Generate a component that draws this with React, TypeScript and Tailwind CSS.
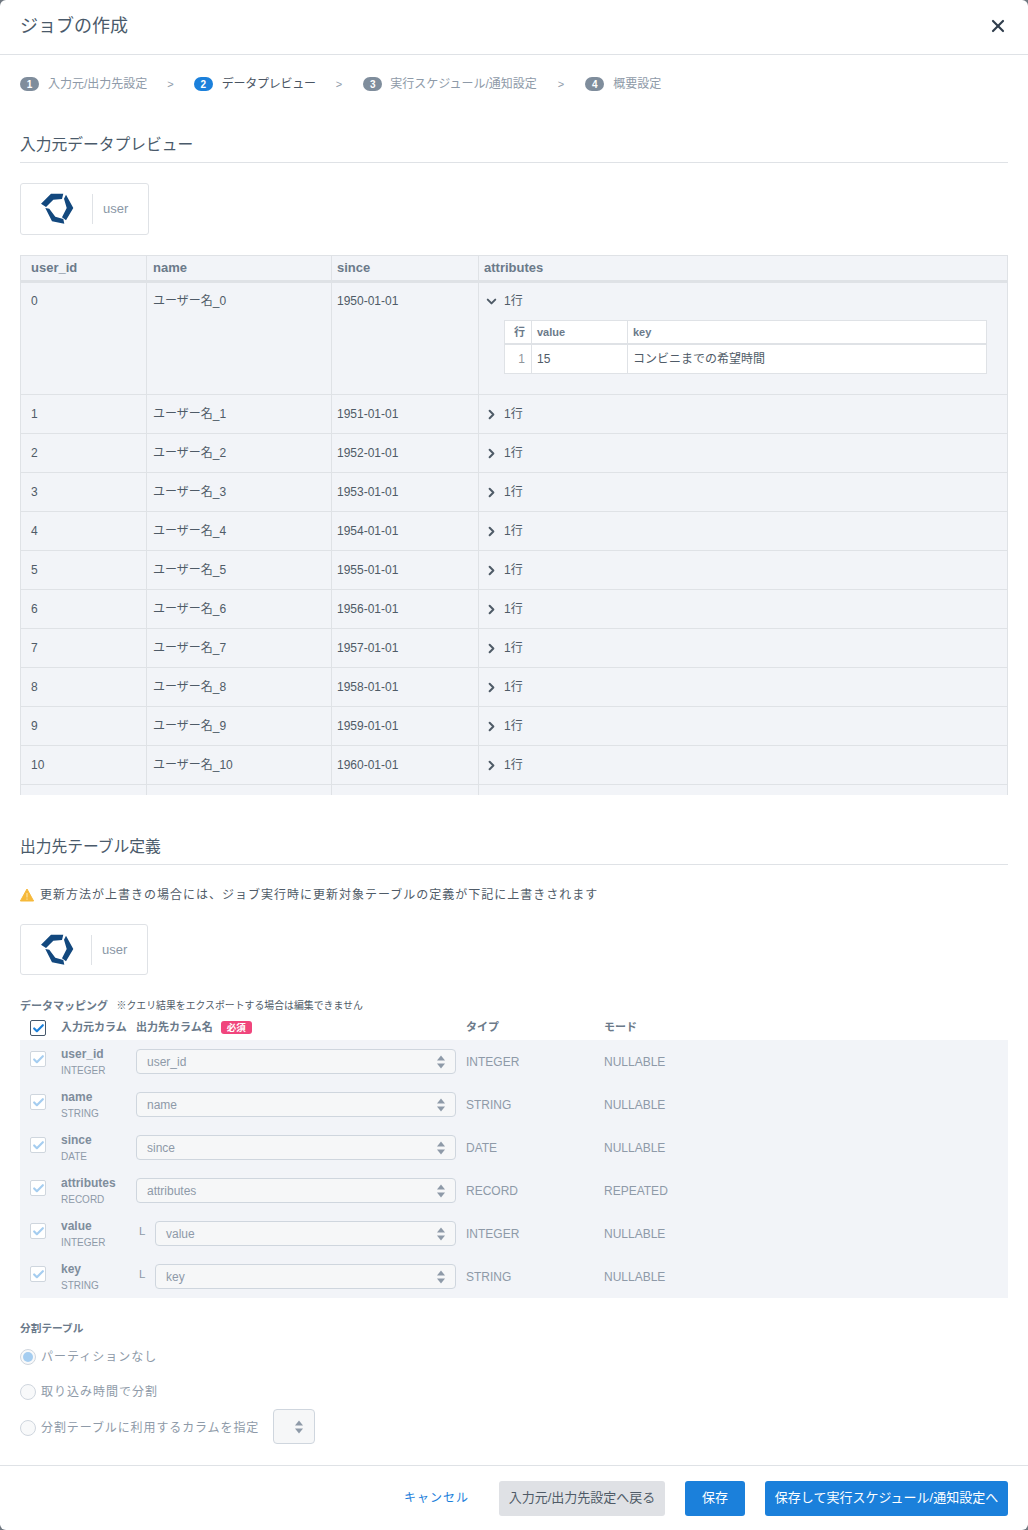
import { ChevronDown, ChevronRight, X, Check } from "lucide-react";

const FONT = 'font-["Liberation_Sans","Noto_Sans_CJK_JP",sans-serif]';

function Logo() {
  return (
    <svg width="33" height="32" viewBox="0 0 33 32" fill="#12487e" className="shrink-0">
      <path d="M0 10.7 L10 0.7 L22.3 0.7 L21 6 L12.3 6.7 L5 14 Z" strokeLinejoin="round" />
      <path d="M25 1.7 L32.3 15 L25 27.3 L21 24.3 L25.7 15 L23 5.7 Z" strokeLinejoin="round" />
      <path d="M4.3 15 L11 28.3 L23.3 30.7 L22.3 26 L14.3 23.7 L8.3 15.7 Z" strokeLinejoin="round" />
    </svg>
  );
}

function TableChip({ w, h, gap }: { w: string; h: string; gap: string }) {
  return (
    <div className={`flex items-center rounded-[3px] border border-[#dfe2e6] bg-white pl-5 ${w} ${h}`}>
      <Logo />
      <div className={`h-[30px] w-px bg-[#dfe2e6] ${gap}`} />
      <span className="ml-[10px] text-[13px] text-[#8a97a6]">user</span>
    </div>
  );
}

function Step({
  n,
  label,
  active,
  arrowCls,
  cls,
  wrap,
}: {
  n: number;
  label: string;
  active?: boolean;
  arrowCls?: string;
  cls?: string;
  wrap?: string;
}) {
  return (
    <div className={`flex items-center ${wrap ?? ""}`}>
      <span
        className={`flex h-[14px] w-[19px] items-center justify-center rounded-full text-[10px] font-bold text-white ${
          active ? "bg-[#1b80db]" : "bg-[#7f8d9c]"
        }`}
      >
        {n}
      </span>
      <span className={`text-xs ${active ? "text-[#4a5563]" : "text-[#8e9aa8]"} ${cls ?? "ml-[9px]"}`}>{label}</span>
      {arrowCls && <span className={`text-[11px] text-[#8e9aa8] ${arrowCls}`}>&gt;</span>}
    </div>
  );
}

function SectionTitle({ children }: { children: string }) {
  return (
    <div className="h-[29px] border-b border-[#dfe2e6] text-[15.75px] leading-[22px] text-[#4a5a6a]">{children}</div>
  );
}

const COLS = "grid grid-cols-[125px_185px_147px_1fr]";

function DataRow({ i }: { i: number }) {
  return (
    <div className={`${COLS} h-[39px] items-stretch border-b border-[#dfe2e6] text-xs text-[#4f5b67]`}>
      <div className="flex items-center pl-[10px]">{i}</div>
      <div className="flex items-center border-l border-[#dfe2e6] pl-[6px]">ユーザー名_{i}</div>
      <div className="flex items-center border-l border-[#dfe2e6] pl-[5px]">{1950 + i}-01-01</div>
      <div className="flex items-center border-l border-[#dfe2e6] pl-[5px]">
        <ChevronRight size={15} strokeWidth={3.2} className="text-[#4f5b67]" />
        <span className="ml-[5px]">1行</span>
      </div>
    </div>
  );
}

function PreviewTable() {
  return (
    <div className="mt-5 h-[540px] overflow-hidden border-x border-t border-[#dfe2e6] bg-[#f2f4f8]">
      <div className={`${COLS} h-[27px] items-center border-b-[3px] border-[#dfe2e6] text-[13px] font-bold text-[#6b7a8a]`}>
        <div className="flex h-full items-center pl-[10px]">user_id</div>
        <div className="flex h-full items-center border-l border-[#dfe2e6] pl-[6px]">name</div>
        <div className="flex h-full items-center border-l border-[#dfe2e6] pl-[5px]">since</div>
        <div className="flex h-full items-center border-l border-[#dfe2e6] pl-[5px]">attributes</div>
      </div>
      <div className={`${COLS} h-[112px] border-b border-[#dfe2e6] text-xs text-[#4f5b67]`}>
        <div className="pl-[10px] pt-[10px]">0</div>
        <div className="border-l border-[#dfe2e6] pl-[6px] pt-[10px]">ユーザー名_0</div>
        <div className="border-l border-[#dfe2e6] pl-[5px] pt-[10px]">1950-01-01</div>
        <div className="border-l border-[#dfe2e6] pl-[5px] pr-[20px] pt-[10px]">
          <div className="flex h-4 items-center">
            <ChevronDown size={15} strokeWidth={3.2} />
            <span className="ml-[5px]">1行</span>
          </div>
          <div className="ml-[20px] mt-[11px] border border-[#dfe2e6] bg-white">
            <div className="grid h-[24px] grid-cols-[26px_96px_1fr] items-center border-b-2 border-[#dfe2e6] text-[11px] font-bold text-[#6b7a8a]">
              <div className="pr-[6px] text-right">行</div>
              <div className="flex h-full items-center border-l border-[#dfe2e6] pl-[5px]">value</div>
              <div className="flex h-full items-center border-l border-[#dfe2e6] pl-[5px]">key</div>
            </div>
            <div className="grid h-[28px] grid-cols-[26px_96px_1fr] items-center text-xs">
              <div className="pr-[6px] text-right text-[#8f959c]">1</div>
              <div className="flex h-full items-center border-l border-[#dfe2e6] pl-[5px]">15</div>
              <div className="flex h-full items-center border-l border-[#dfe2e6] pl-[5px]">コンビニまでの希望時間</div>
            </div>
          </div>
        </div>
      </div>
      {[1, 2, 3, 4, 5, 6, 7, 8, 9, 10].map((i) => (
        <DataRow key={i} i={i} />
      ))}
      <div className={`${COLS} h-[39px]`}>
        <div />
        <div className="border-l border-[#dfe2e6]" />
        <div className="border-l border-[#dfe2e6]" />
        <div className="border-l border-[#dfe2e6]" />
      </div>
    </div>
  );
}

function Updown() {
  return (
    <svg width="10" height="14" viewBox="0 0 10 14" className="shrink-0">
      <path d="M5 0.5 L9 5.5 H1 Z" fill="#8e9aa8" />
      <path d="M5 13.5 L9 8.5 H1 Z" fill="#8e9aa8" />
    </svg>
  );
}

function Box({ dark }: { dark?: boolean }) {
  return (
    <span
      className={`flex h-4 w-4 items-center justify-center rounded-[2px] border bg-white ${
        dark ? "border-[#44576b]" : "border-[#cfd6de]"
      }`}
    >
      <Check size={13} strokeWidth={4} className={dark ? "text-[#1b80db]" : "text-[#a5cdf0]"} />
    </span>
  );
}

const MAP_ROWS = [
  { n: "user_id", t: "INTEGER", m: "NULLABLE" },
  { n: "name", t: "STRING", m: "NULLABLE" },
  { n: "since", t: "DATE", m: "NULLABLE" },
  { n: "attributes", t: "RECORD", m: "REPEATED" },
  { n: "value", t: "INTEGER", m: "NULLABLE", child: true },
  { n: "key", t: "STRING", m: "NULLABLE", child: true },
];

function MapRow({ n, t, m, child }: { n: string; t: string; m: string; child?: boolean }) {
  return (
    <div className="flex h-[43px] items-center text-[#8e9aa8]">
      <div className="mb-[5px] ml-[10px] w-[31px] shrink-0">
        <Box />
      </div>
      <div className="w-[75px] shrink-0 pt-[2px]">
        <div className="text-xs font-bold leading-[16px] text-[#7f8d9c]">{n}</div>
        <div className="text-[10px] leading-[17px]">{t}</div>
      </div>
      <div className="flex w-[320px] shrink-0 items-center">
        {child && <span className="ml-[3px] mr-[9px] w-[7px] -translate-y-[2px] text-[11.5px]">L</span>}
        <div className="flex h-[25px] flex-1 items-center justify-between rounded-[4px] border border-[#cfd6de] bg-[#f6f7f8] pl-[10px] pr-[9px] text-xs">
          <span>{n}</span>
          <Updown />
        </div>
      </div>
      <div className="ml-[10px] w-[138px] shrink-0 text-xs">{t}</div>
      <div className="text-xs">{m}</div>
    </div>
  );
}

function Radio({ on, label, track }: { on?: boolean; label: string; track: string }) {
  return (
    <div className="flex items-center">
      <span className="flex h-4 w-4 items-center justify-center rounded-full border border-[#cfd6de] bg-[#f8f9fa]">
        {on && <span className="h-[10px] w-[10px] rounded-full bg-[#a5cdf0]" />}
      </span>
      <span className={`ml-[5px] text-xs text-[#8e9aa8] ${track}`}>{label}</span>
    </div>
  );
}

export default function App() {
  return (
    <div className={`h-[1530px] w-[1028px] overflow-hidden bg-[#6f7780] ${FONT}`}>
      <div className="flex h-full flex-col rounded-[6px] bg-white">
        <header className="flex h-[55px] shrink-0 items-center justify-between border-b border-[#dfe2e6] pb-[2px] pl-5 pr-[20px]">
          <h1 className="text-lg text-[#4a5a6a]">ジョブの作成</h1>
          <X size={20} strokeWidth={2.6} className="text-[#2f3d4c]" />
        </header>

        <div className="flex-1 px-5">
          <div className="mt-[22px] flex h-[14px] items-center">
            <Step n={1} label="入力元/出力先設定" arrowCls="mx-[20px]" />
            <Step n={2} label="データプレビュー" active arrowCls="mx-[20px]" cls="ml-[9px] tracking-[-0.25px]" />
            <Step n={3} label="実行スケジュール/通知設定" arrowCls="ml-[21px] mr-[20px]" cls="ml-[8px]" wrap="ml-[1px]" />
            <Step n={4} label="概要設定" wrap="ml-[1px]" />
          </div>

          <div className="mt-[43px]">
            <SectionTitle>入力元データプレビュー</SectionTitle>
          </div>
          <div className="mt-5">
            <TableChip w="w-[129px]" h="h-[52px]" gap="ml-[18px]" />
          </div>
          <PreviewTable />

          <div className="mt-[41px]">
            <SectionTitle>出力先テーブル定義</SectionTitle>
          </div>
          <div className="mt-[21px] flex h-[18px] items-center">
            <svg width="14" height="14" viewBox="0 0 14 14" className="shrink-0">
              <path d="M7 1 L13.6 13 H0.4 Z" fill="#f6b93b" stroke="#f6b93b" strokeLinejoin="round" />
              <path d="M7 5 V9.4 M7 10.6 V11.8" stroke="#fbe3a8" strokeWidth="1.1" />
            </svg>
            <span className="ml-[6px] text-xs tracking-[1px] text-[#4f5b67]">
              更新方法が上書きの場合には、ジョブ実行時に更新対象テーブルの定義が下記に上書きされます
            </span>
          </div>
          <div className="mt-5">
            <TableChip w="w-[128px]" h="h-[51px]" gap="ml-[17px]" />
          </div>

          <div className="mt-[24px] flex h-[14px] items-center">
            <span className="text-[11px] font-bold text-[#6b7a8a]">データマッピング</span>
            <span className="ml-[8.5px] text-[9.9px] text-[#4f5b67]">※クエリ結果をエクスポートする場合は編集できません</span>
          </div>
          <div className="flex h-[27px] items-center pt-[2px] text-[11px] font-bold text-[#6b7a8a]">
            <div className="ml-[10px] mt-[1px] w-[31px] shrink-0">
              <Box dark />
            </div>
            <div className="w-[75px] shrink-0">入力元カラム</div>
            <div className="flex w-[320px] shrink-0 items-center">
              <span>出力先カラム名</span>
              <span className="ml-[8px] rounded-[3px] bg-[#f0457c] px-[6px] text-[9.5px] leading-[13px] text-white">必須</span>
            </div>
            <div className="ml-[10px] w-[138px] shrink-0">タイプ</div>
            <div>モード</div>
          </div>
          <div className="bg-[#f2f4f8]">
            {MAP_ROWS.map((r) => (
              <MapRow key={r.n} {...r} />
            ))}
          </div>

          <div className="mt-[22px] text-[10.7px] font-bold leading-[16px] text-[#6b7a8a]">分割テーブル</div>
          <div className="mt-[12px] flex h-[18px] items-center">
            <Radio on label="パーティションなし" track="tracking-[1px]" />
          </div>
          <div className="mt-[17px] flex h-[18px] items-center">
            <Radio label="取り込み時間で分割" track="tracking-[1px]" />
          </div>
          <div className="mt-[8px] flex items-center">
            <div className="pt-[2px]">
              <Radio label="分割テーブルに利用するカラムを指定" track="tracking-[0.9px]" />
            </div>
            <div className="ml-[14px] flex h-[35px] w-[42px] items-center justify-end rounded-[4px] border border-[#cfd6de] bg-[#f6f7f8] pr-[10px]">
              <Updown />
            </div>
          </div>
        </div>

        <footer className="flex h-[65px] shrink-0 items-center justify-end border-t border-[#dfe2e6] pr-5 text-[13px]">
          <span className="mr-[30px] text-xs tracking-[1px] text-[#1b80db]">キャンセル</span>
          <button className="h-[35px] w-[166px] rounded-[3px] bg-[#dfe1e5] text-[#4f5b67]">入力元/出力先設定へ戻る</button>
          <button className="ml-5 h-[35px] w-[60px] rounded-[3px] bg-[#1b80db] text-white">保存</button>
          <button className="ml-5 h-[35px] w-[243px] rounded-[3px] bg-[#1b80db] text-white">保存して実行スケジュール/通知設定へ</button>
        </footer>
      </div>
    </div>
  );
}
